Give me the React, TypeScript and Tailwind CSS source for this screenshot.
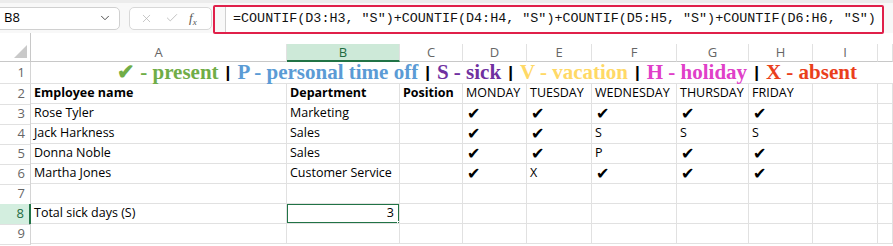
import { X, Check, ChevronDown } from 'lucide-react';

const cols = 'grid grid-cols-[31px_256px_113px_63px_64px_65px_85px_72px_64px_65px_1fr]';
const letters = ['A', 'B', 'C', 'D', 'E', 'F', 'G', 'H', 'I', ''];
const cell = 'border-r border-b border-[#e1e1e1] h-5 px-[3px] flex items-center whitespace-nowrap overflow-hidden';
const CK = '✔';

const rows: { n: number; cells: string[]; bold?: number }[] = [
  { n: 2, cells: ['Employee name', 'Department', 'Position', 'MONDAY', 'TUESDAY', 'WEDNESDAY', 'THURSDAY', 'FRIDAY', '', ''], bold: 3 },
  { n: 3, cells: ['Rose Tyler', 'Marketing', '', CK, CK, CK, CK, CK, '', ''] },
  { n: 4, cells: ['Jack Harkness', 'Sales', '', CK, CK, 'S', 'S', 'S', '', ''] },
  { n: 5, cells: ['Donna Noble', 'Sales', '', CK, CK, 'P', CK, CK, '', ''] },
  { n: 6, cells: ['Martha Jones', 'Customer Service', '', CK, 'X', CK, CK, CK, '', ''] },
  { n: 7, cells: ['', '', '', '', '', '', '', '', '', ''] },
];

const legend = [
  { t: '✔  - present', c: 'text-[#70ad47]' },
  { t: 'P - personal time off', c: 'text-[#5b9bd5]' },
  { t: 'S - sick', c: 'text-[#7030a0]' },
  { t: 'V - vacation', c: 'text-[#ffd966]' },
  { t: 'H - holiday', c: 'text-[#e040c8]' },
  { t: 'X - absent', c: 'text-[#ea3f1c]' },
];

function RowHead({ n, active }: { n: number; active?: boolean }) {
  return (
    <div
      className={`h-full flex items-center justify-end pr-[5px] text-[13px] border-b ${
        active ? 'bg-[#d3eedf] text-[#1e6b41] border-r-2 border-r-[#217346] border-b-[#e1e1e1]' : 'text-[#666] border-r border-[#d4d4d4] border-b-[#e1e1e1]'
      }`}
    >
      {n}
    </div>
  );
}

function Cell({ v, bold }: { v: string; bold?: boolean }) {
  const isCk = v === CK;
  return (
    <div className={`${cell} ${bold ? 'font-bold' : ''}`}>
      {isCk ? <span className="text-[16px] leading-none pl-[1px] font-['DejaVu_Sans']">{v}</span> : v}
    </div>
  );
}

export default function App() {
  return (
    <div className="w-[893px] h-[246px] overflow-hidden bg-white text-black font-['Open_Sans',sans-serif] text-[12.5px]">
      {/* formula toolbar */}
      <div className="h-[33px] bg-[#f8f8f8] border-t-[3px] border-[#ececec] flex items-center">
        <div className="ml-[-6px] w-[126px] h-[23px] bg-white border border-[#d0d0d0] rounded-[5px] flex items-center justify-between pl-[9px] pr-[7px] text-[13px]">
          <span>B8</span>
          <ChevronDown className="w-[14px] h-[14px] text-[#444]" strokeWidth={1.6} />
        </div>
        <div className="ml-[9px] w-[83px] h-[23px] bg-white border border-[#d8d8d8] rounded-[5px] flex items-center pl-[10px] gap-[12px] text-[#b0b0b0]">
          <X className="w-[13px] h-[13px]" strokeWidth={1.3} />
          <Check className="w-[14px] h-[14px]" strokeWidth={1.3} />
          <span className="font-['Liberation_Serif',serif] italic text-[13px] text-[#555] -ml-[2px]">f<sub className="text-[9px]">x</sub></span>
        </div>
        <div className="ml-[1px] mt-[2px] w-[671px] h-[29px] border-2 border-[#e0204a] rounded-[2px] flex items-stretch">
          <div className="ml-[10px] flex-1 bg-white border-l border-[#cfcfcf] flex items-center pl-[7px] font-['Liberation_Mono',monospace] text-[13.4px] text-[#111]">
            =COUNTIF(D3:H3, "S")+COUNTIF(D4:H4, "S")+COUNTIF(D5:H5, "S")+COUNTIF(D6:H6, "S")
          </div>
        </div>
      </div>

      <div className={cols}>
        <div className="h-[11px] border-r border-[#c8c8c8]" />
        <div className="col-span-10 h-[11px]" />
      </div>

      {/* column headers */}
      <div className={`${cols} h-[18px]`}>
        <div className="relative border-r border-b border-[#c8c8c8]">
          <div className="absolute right-[3px] bottom-[3px] w-0 h-0 border-l-[13px] border-l-transparent border-b-[13px] border-b-[#c9c9c9]" />
        </div>
        {letters.map((l, i) => (
          <div
            key={i}
            className={`flex items-center justify-center text-[13px] leading-none border-r border-[#e1e1e1] ${
              l === 'B' ? 'bg-[#cde9d8] text-[#1e6b41] border-b-2 border-b-[#217346]' : 'text-[#666] border-b border-b-[#c8c8c8]'
            }`}
          >
            {l}
          </div>
        ))}
      </div>

      {/* row 1 legend */}
      <div className={`${cols} h-[22px]`}>
        <RowHead n={1} />
        <div className="col-span-10 h-[22px] border-b border-[#e1e1e1] flex items-center pl-[86px] gap-[7px] font-['Liberation_Serif',serif] font-bold text-[21px] leading-[21px] whitespace-nowrap">
          {legend.map((g, i) => (
            <span key={i} className="flex items-center gap-[7px]">
              {i > 0 && <span className="font-['Liberation_Sans',sans-serif] text-[17px] leading-[21px] text-black">|</span>}
              <span className={g.c}>{g.t}</span>
            </span>
          ))}
        </div>
      </div>

      {rows.map(r => (
        <div key={r.n} className={`${cols} h-5`}>
          <RowHead n={r.n} />
          {r.cells.map((v, i) => (
            <Cell key={i} v={v} bold={r.bold !== undefined && i < r.bold} />
          ))}
        </div>
      ))}

      {/* row 8 */}
      <div className={`${cols} h-5`}>
        <RowHead n={8} active />
        <div className={cell}>Total sick days (S)</div>
        <div className={`${cell} relative justify-end`}>
          <div className="absolute -left-[1px] -top-[1px] right-[-1px] bottom-[-1px] border-2 border-[#217346]" />
          <div className="absolute right-[-3px] bottom-[-3px] w-[5px] h-[5px] bg-[#217346] border border-white" />
          <span className="pr-[2px]">3</span>
        </div>
        {Array.from({ length: 8 }).map((_, i) => (
          <div key={i} className={cell} />
        ))}
      </div>

      <div className={`${cols} h-5`}>
        <RowHead n={9} />
        {Array.from({ length: 10 }).map((_, i) => (
          <div key={i} className={cell} />
        ))}
      </div>
    </div>
  );
}
